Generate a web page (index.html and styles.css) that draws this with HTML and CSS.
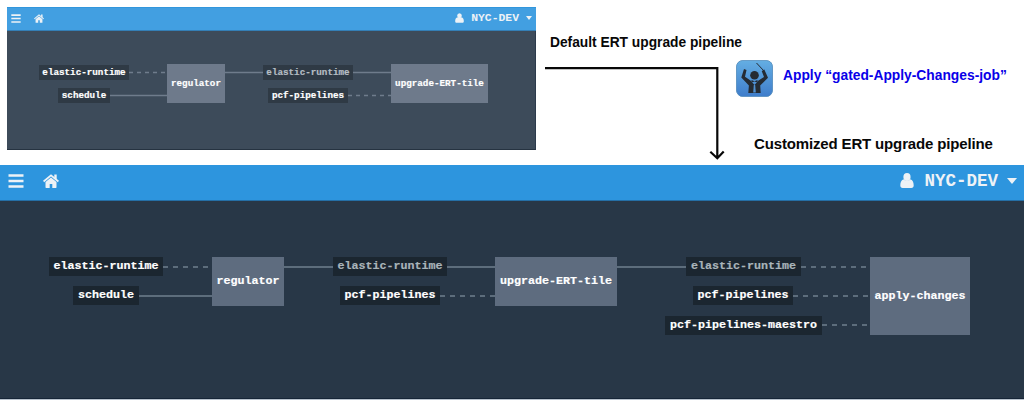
FILE: index.html
```html
<!DOCTYPE html>
<html lang="en">
<head>
<meta charset="utf-8">
<title>ERT upgrade pipelines</title>
<link rel="stylesheet" href="styles.css">
</head>
<body>
<svg class="defs" aria-hidden="true">
  <symbol id="menu" viewBox="0 0 16 14"><path d="M.5 1.5h15M.5 7h15M.5 12.5h15" stroke="currentColor" stroke-width="2.6"/></symbol>
  <symbol id="home" viewBox="0 0 16 14"><path d="M8 3.400 2.500 8v5.300q0 .6.6.6h3.600V9.900h2.600v4h3.600q.6 0 .6-.6V8z" fill="currentColor"/><path d="M.6 7.500 8 1.300l7.400 6.200" fill="none" stroke="currentColor" stroke-width="1.800"/><path d="M11.300.5h2.400v5.200l-2.400-2z" fill="currentColor"/></symbol>
  <symbol id="user" viewBox="0 0 14 15"><ellipse cx="7" cy="4" rx="3.6" ry="4" fill="currentColor"/><path d="M3.500 6.200C1 7.200.3 9.500.3 12.500.3 14 1.200 15 2.600 15h8.800c1.400 0 2.300-1 2.300-2.500 0-3-.7-5.300-3.200-6.300C9.500 7.200 8.300 7.500 7 7.500S4.500 7.200 3.500 6.200z" fill="currentColor"/></symbol>
</svg>
<main class="page">
  <section class="top">
    <div class="panel small">
      <header class="bar">
        <svg class="menu"><use href="#menu"/></svg>
        <svg class="home"><use href="#home"/></svg>
        <div class="team"><svg class="user"><use href="#user"/></svg><span>NYC-DEV</span><i class="caret"></i></div>
      </header>
      <div class="canvas">
        <svg class="wires" viewBox="7 31 529 119">
          <path class="dash" d="M129 72.500H167M348 95.500H391"/>
          <path d="M110 95.500H167M225 72.500H263M353 72.500H391"/>
        </svg>
        <div class="node s-in1">elastic-runtime</div>
        <div class="node s-in2">schedule</div>
        <div class="node job s-reg">regulator</div>
        <div class="node dim s-mid1">elastic-runtime</div>
        <div class="node s-mid2">pcf-pipelines</div>
        <div class="node job s-upg">upgrade-ERT-tile</div>
      </div>
    </div>
    <div class="notes">
      <svg class="arrow" viewBox="536 0 488 165"><path d="M545 68.200H717.300V158M710.300 151.800 717.300 158.300 723.700 151.500" fill="none" stroke="#080808" stroke-width="2.200"/></svg>
      <p class="note default">Default ERT upgrade pipeline</p>
      <svg class="maestro" viewBox="0 0 37 37">
        <defs><linearGradient id="sky" x2="0" y2="1"><stop stop-color="#64aee3"/><stop offset="1" stop-color="#3f7dcb"/></linearGradient></defs>
        <rect x=".4" y=".4" width="36.200" height="36.200" rx="6.500" fill="url(#sky)" stroke="#4b86b8" stroke-width=".8"/>
        <circle cx="18.500" cy="15.200" r="4.300" fill="#252b33"/>
        <path d="M8 9 10.500 10 9 16.800 14.500 20.500 18.500 25 22.500 20.500 28 17 25.700 11 28.300 9.600 32 17.800 24.200 25.500 24.700 33H12.300L12.900 25.500 5.300 17.500z" fill="#252b33"/>
        <path d="m15.500 20 3 1.300 3-1.300v2.600l-3-1-3 1z" fill="#252b33"/>
        <path d="M17.800 25h1.400l.6 7.500h-2.600z" fill="#4f8fcf"/>
        <path d="m20.500 3 7.500 8" stroke="#252b33" stroke-width="1"/>
      </svg>
      <p class="note apply">Apply “gated-Apply-Changes-job”</p>
      <p class="note custom">Customized ERT upgrade pipeline</p>
    </div>
  </section>
  <section class="panel large">
    <header class="bar">
      <svg class="menu"><use href="#menu"/></svg>
      <svg class="home"><use href="#home"/></svg>
      <div class="team"><svg class="user"><use href="#user"/></svg><span>NYC-DEV</span><i class="caret"></i></div>
    </header>
    <div class="canvas">
      <svg class="wires" viewBox="0 200 1024 199">
        <path class="dash" d="M163 267H212M440 296H495M801 267H870M793 296H870M822 325H870"/>
        <path d="M139 296H212M284 267H333M447 267H495M617 267H686"/>
      </svg>
      <div class="node l-in1">elastic-runtime</div>
      <div class="node l-in2">schedule</div>
      <div class="node job l-reg">regulator</div>
      <div class="node dim l-mid1">elastic-runtime</div>
      <div class="node l-mid2">pcf-pipelines</div>
      <div class="node job l-upg">upgrade-ERT-tile</div>
      <div class="node dim l-end1">elastic-runtime</div>
      <div class="node l-end2">pcf-pipelines</div>
      <div class="node l-end3">pcf-pipelines-maestro</div>
      <div class="node job l-apply">apply-changes</div>
    </div>
  </section>
</main>
</body>
</html>
```

FILE: styles.css
```css
* { box-sizing: border-box; }
body { margin: 0; background: #fff; overflow: hidden; }
.defs { position: absolute; width: 0; height: 0; }
.page { width: 1024px; height: 403px; display: flex; flex-direction: column; }
.top { height: 165px; display: flex; padding: 7px 0 0 7px; }
.panel { display: flex; flex-direction: column; font-family: "Courier New", "Liberation Mono", monospace; font-weight: bold; color: #fff; }
.bar { display: flex; align-items: center; flex: none; color: #edf2f6; }
.bar svg { flex: none; display: block; }
.team { margin-left: auto; display: flex; align-items: center; }
.caret { display: block; border-style: solid; border-color: #edf2f6 transparent transparent; }
.canvas { position: relative; flex: 1; }
.wires { position: absolute; inset: 0; width: 100%; height: 100%; fill: none; }
.node { position: absolute; display: flex; align-items: center; justify-content: center; white-space: nowrap; -webkit-text-stroke: .2px; }

.small { width: 529px; height: 143px; flex: none; background: #3d4b5a; }
.small .bar { height: 24px; padding: 0 4px 2px 4px; background: #429fe1; border-top: 1px solid #3196dc; border-bottom: 1px solid #347fb6; }
.small .canvas { border-bottom: 1px solid #263341; border-right: 1px solid #2c3b4c; }
.small .wires { width: 529px; height: 119px; stroke: #6f7c8c; stroke-width: 1.5; }
.small .dash { stroke-dasharray: 4 4; }
.small .menu { width: 10px; height: 9px; }
.small .home { width: 10px; height: 9px; margin-left: 13px; }
.small .user { width: 9px; height: 10px; margin-right: 7px; }
.small .team { font-size: 11.4px; line-height: 14px; }
.small .caret { border-width: 4px 3px 0; margin-left: 7px; }
.small .node { height: 15px; background: #2f3a45; font-size: 9.25px; line-height: 12px; }
.small .job { height: 39px; background: #6e7a8b; }
.small .dim { color: #b5bdc3; }
.s-in1 { left: 32px; top: 34px; width: 90px; }
.s-in2 { left: 51px; top: 57px; width: 52px; }
.s-reg { left: 160px; top: 33px; width: 58px; }
.s-mid1 { left: 256px; top: 34px; width: 90px; }
.s-mid2 { left: 261px; top: 57px; width: 80px; }
.s-upg { left: 384px; top: 33px; width: 97px; }

.large { height: 235px; background: #283747; border-bottom: 1px solid #b9c3ce; }
.large .bar { height: 36px; padding: 0 7px 4px 8px; background: #2d95de; border-bottom: 1px solid #256fa6; }
.large .canvas { border-bottom: 1px solid #162537; }
.large .wires { width: 1024px; height: 199px; top: -1px; stroke: #5d6d7c; stroke-width: 2; }
.large .dash { stroke-dasharray: 5 5; }
.large .menu { width: 16px; height: 14px; }
.large .home { width: 16px; height: 14px; margin-left: 19px; }
.large .user { width: 14px; height: 15px; margin-right: 10px; }
.large .team { font-size: 17.5px; line-height: 22px; }
.large .caret { border-width: 6px 5px 0; margin-left: 9px; }
.large .node { height: 19px; padding-bottom: 1px; background: #1b2630; font-size: 11.67px; line-height: 16px; }
.large .job { height: 49px; background: #5e6c7f; }
.large .dim { color: #a9b4ba; }
.l-in1 { left: 49px; top: 56px; width: 114px; }
.l-in2 { left: 73px; top: 85px; width: 66px; }
.l-reg { left: 212px; top: 56px; width: 72px; }
.l-mid1 { left: 333px; top: 56px; width: 114px; }
.l-mid2 { left: 340px; top: 85px; width: 100px; }
.l-upg { left: 495px; top: 56px; width: 122px; }
.l-end1 { left: 686px; top: 56px; width: 115px; }
.l-end2 { left: 693px; top: 85px; width: 100px; }
.l-end3 { left: 665px; top: 115px; width: 157px; }
.large .l-apply { left: 870px; top: 56px; width: 100px; height: 78px; }

.notes { position: relative; width: 488px; height: 165px; margin-top: -7px; flex: none; font-family: "Liberation Sans", Arial, sans-serif; color: #080808; }
.arrow { position: absolute; left: 0; top: 0; width: 488px; height: 165px; }
.note { position: absolute; margin: 0; white-space: nowrap; line-height: 20px; font-weight: bold; }
.default { left: 14px; top: 33px; font-size: 13.77px; }
.maestro { position: absolute; left: 200px; top: 60px; width: 37px; height: 37px; }
.apply { left: 247px; top: 66px; font-size: 13.8px; color: #0900e8; }
.custom { left: 218px; top: 134px; font-size: 15px; letter-spacing: -.15px; }
```
